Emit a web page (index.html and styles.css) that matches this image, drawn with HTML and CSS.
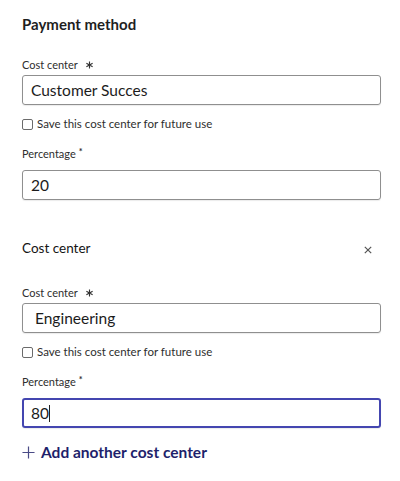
FILE: index.html
```html
<!DOCTYPE html>
<html lang="en">
<head>
<meta charset="utf-8">
<title>Payment method</title>
<link rel="stylesheet" href="styles.css">
</head>
<body>
<main class="form">
  <h1 class="title">Payment method</h1>

  <section class="group">
    <div class="label">Cost center <svg class="req" viewBox="0 0 10 10" width="9" height="8"><path d="M5 0.5V9.5M1.1 2.75L8.9 7.25M1.1 7.25L8.9 2.75"/></svg></div>
    <div class="field">Customer Succes</div>
    <label class="check"><span class="box"></span>Save this cost center for future use</label>
    <div class="label label-pct">Percentage <span class="star">*</span></div>
    <div class="field field-pct">20</div>
  </section>

  <section class="group group-next">
    <div class="group-head">
      <h2 class="subtitle">Cost center</h2>
      <svg class="close" viewBox="0 0 8 8" width="8" height="8"><path d="M0.8 0.8L7.2 7.2M7.2 0.8L0.8 7.2"/></svg>
    </div>
    <div class="label label-second">Cost center <svg class="req" viewBox="0 0 10 10" width="9" height="8"><path d="M5 0.5V9.5M1.1 2.75L8.9 7.25M1.1 7.25L8.9 2.75"/></svg></div>
    <div class="field">&nbsp;Engineering</div>
    <label class="check"><span class="box"></span>Save this cost center for future use</label>
    <div class="label label-pct">Percentage <span class="star">*</span></div>
    <div class="field field-pct field-focus">80<span class="caret"></span></div>
  </section>

  <a class="add" href="#"><svg class="plus" viewBox="0 0 14 14" width="13" height="13"><path d="M7 0.5V13.5M0.5 7H13.5"/></svg>Add another cost center</a>
</main>
</body>
</html>
```

FILE: styles.css
```css
html, body {
  margin: 0;
  padding: 0;
  background: #ffffff;
}

body {
  font-family: Lato, "Open Sans", "Liberation Sans", sans-serif;
  color: #222222;
}

.form {
  padding: 14px 19px 0 22px;
  display: flex;
  flex-direction: column;
}

.title {
  margin: 0;
  font-size: 15px;
  line-height: 20px;
  font-weight: 700;
  color: #1f1f1f;
}

.group {
  display: flex;
  flex-direction: column;
  margin-top: 24px;
}

.group-next {
  margin-top: 38px;
}

.group-head {
  display: flex;
  align-items: center;
  justify-content: space-between;
  padding-right: 9px;
  height: 20px;
}

.subtitle {
  margin: 0;
  font-size: 13.5px;
  line-height: 20px;
  font-weight: 400;
  color: #141414;
}

.close {
  stroke: #555555;
  stroke-width: 1.2;
  fill: none;
  margin-top: 4px;
}

.label {
  font-size: 11px;
  line-height: 14px;
  color: #2e2e2e;
  display: flex;
  align-items: center;
}

.label-second {
  margin-top: 28px;
}

.label-pct {
  margin-top: 15px;
}

.req {
  margin-left: 7px;
  stroke: #333333;
  stroke-width: 1.4;
  fill: none;
}

.star {
  font-weight: 700;
  font-size: 9px;
  align-self: flex-start;
  margin-left: 3px;
  line-height: 10px;
}

.field {
  margin-top: 3px;
  height: 30px;
  box-sizing: border-box;
  border: 1px solid #8f8f8f;
  border-radius: 3px;
  padding: 0 8px;
  display: flex;
  align-items: center;
  font-size: 15.5px;
  color: #1c1c1c;
  white-space: pre;
  box-shadow: 0 1px 1px rgba(0, 0, 0, 0.08);
}

.field-pct {
  margin-top: 9px;
}

.field-focus {
  border: 2px solid #4446b0;
  padding: 0 7px;
}

.caret {
  display: inline-block;
  width: 1px;
  height: 17px;
  background: #222222;
}

.check {
  margin-top: 11px;
  display: flex;
  align-items: center;
  font-size: 11.5px;
  line-height: 16px;
  color: #2e2e2e;
}

.box {
  width: 11px;
  height: 11px;
  box-sizing: border-box;
  border: 1px solid #6b6b6b;
  border-radius: 2px;
  margin-right: 4px;
  background: #ffffff;
}

.add {
  margin-top: 14px;
  display: flex;
  align-items: center;
  font-size: 15.5px;
  line-height: 20px;
  font-weight: 700;
  color: #1e1f6b;
  text-decoration: none;
  align-self: flex-start;
}

.plus {
  stroke: #4a4b86;
  stroke-width: 1.3;
  fill: none;
  margin-right: 6px;
}
```
